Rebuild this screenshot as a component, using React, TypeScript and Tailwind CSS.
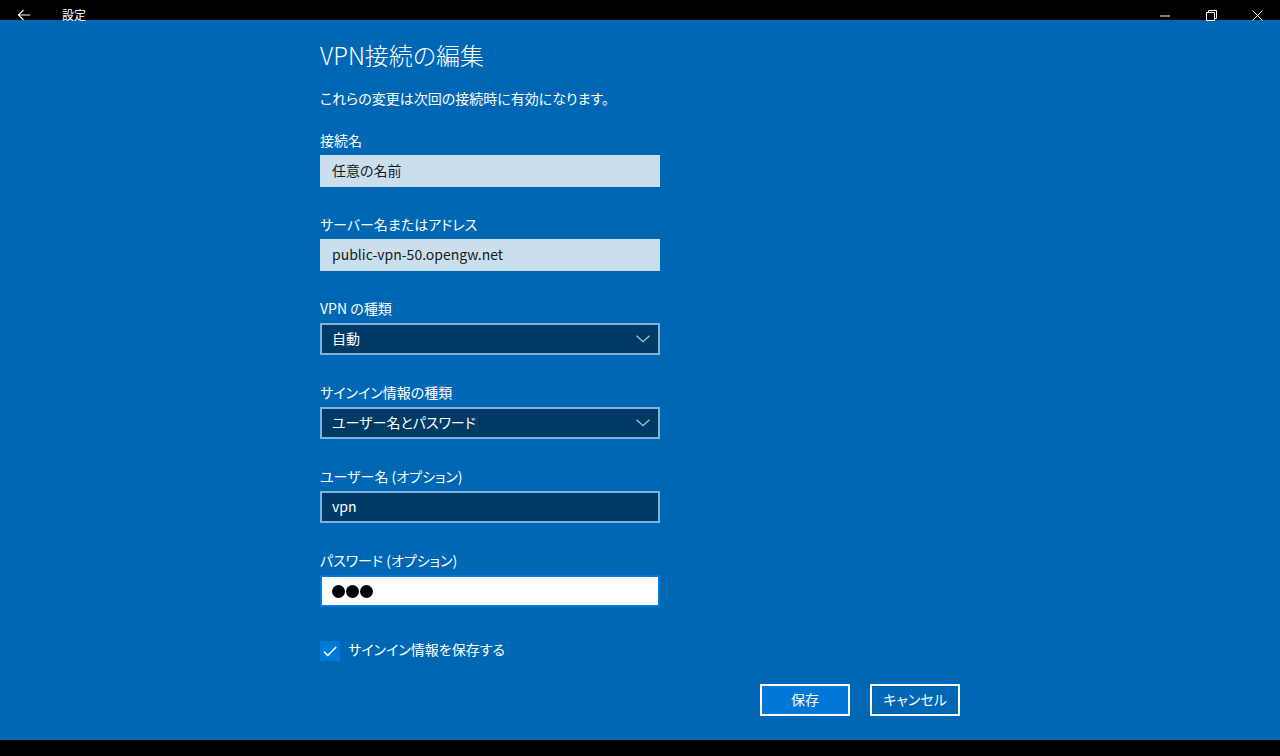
import React from "react";

const font = { fontFamily: '"Noto Sans CJK JP", "Noto Sans", sans-serif' };

function Chevron() {
  return (
    <svg width="14" height="8" viewBox="0 0 14 8" className="text-[#a9c8e3] mt-[2px]">
      <path d="M0.5 0.8 L7 6.8 L13.5 0.8" fill="none" stroke="currentColor" strokeWidth="1.2" />
    </svg>
  );
}

function Field({ label, children, first }: { label: string; children: React.ReactNode; first?: boolean }) {
  return (
    <div className={first ? "mt-[22px]" : "mt-[27px]"}>
      <div className="h-5 leading-5 text-[14px] text-white">{label}</div>
      <div className="mt-[5px] w-[340px] h-8">{children}</div>
    </div>
  );
}

export default function App() {
  return (
    <div
      className="w-[1280px] h-[756px] flex flex-col overflow-hidden select-none [font-feature-settings:'palt']"
      style={font}
    >
      {/* タイトルバー */}
      <div className="h-5 bg-black flex items-start text-white relative">
        <svg width="14" height="12" viewBox="0 0 14 12" className="absolute left-[17px] top-[9px]">
          <path d="M13 6 H1.5 M6.5 1 L1.5 6 L6.5 11" fill="none" stroke="white" strokeWidth="1.1" />
        </svg>
        <span className="absolute left-[62px] top-[8px] text-[12px] leading-[14px]">設定</span>
        <svg width="11" height="2" viewBox="0 0 11 2" className="absolute left-[1160px] top-[15px]">
          <path d="M0 1 H10" stroke="white" strokeWidth="1" />
        </svg>
        <svg width="11" height="11" viewBox="0 0 11 11" className="absolute left-[1206px] top-[10px]">
          <path d="M0.5 2.5 H8.5 V10.5 H0.5 Z" fill="none" stroke="white" strokeWidth="1" />
          <path d="M2.5 2.5 V0.5 H10.5 V8.5 H8.5" fill="none" stroke="white" strokeWidth="1" />
        </svg>
        <svg width="11" height="11" viewBox="0 0 11 11" className="absolute left-[1252px] top-[10px]">
          <path d="M0.5 0.5 L10.5 10.5 M10.5 0.5 L0.5 10.5" fill="none" stroke="white" strokeWidth="1" />
        </svg>
      </div>

      {/* 本体 */}
      <div className="flex-1 bg-[#0067b4] pl-[320px]">
        <div className="w-[640px] flex flex-col">
          <h1 className="mt-[19px] h-8 leading-8 text-[24px] font-light text-white">VPN接続の編集</h1>
          <p className="mt-[17px] h-5 leading-5 text-[14px] text-white">
            これらの変更は次回の接続時に有効になります。
          </p>

          <Field label="接続名" first>
            <div className="h-full bg-[#c9dfee] pl-3 pb-[2px] flex items-center text-[14px] text-[#1a1a1a]">任意の名前</div>
          </Field>

          <Field label="サーバー名またはアドレス">
            <div className="h-full bg-[#c9dfee] pl-3 pb-[2px] flex items-center text-[14px] text-[#1a1a1a]">
              public-vpn-50.opengw.net
            </div>
          </Field>

          <Field label="VPN の種類">
            <div className="h-full bg-[#003b66] border-2 border-[#80b3dc] pl-[10px] pr-[8px] pb-[2px] flex items-center justify-between text-[14px] text-white">
              <span>自動</span>
              <Chevron />
            </div>
          </Field>

          <Field label="サインイン情報の種類">
            <div className="h-full bg-[#003b66] border-2 border-[#80b3dc] pl-[10px] pr-[8px] pb-[2px] flex items-center justify-between text-[14px] text-white">
              <span>ユーザー名とパスワード</span>
              <Chevron />
            </div>
          </Field>

          <Field label="ユーザー名 (オプション)">
            <div className="h-full bg-[#003b66] border-2 border-[#80b3dc] pl-[10px] pb-[2px] flex items-center text-[14px] text-white">
              vpn
            </div>
          </Field>

          <Field label="パスワード (オプション)">
            <div className="h-full bg-white border-2 border-[#0078d7] pl-[10px] flex items-center gap-[1px]">
              <span className="w-[13px] h-[13px] rounded-full bg-black" />
              <span className="w-[13px] h-[13px] rounded-full bg-black" />
              <span className="w-[13px] h-[13px] rounded-full bg-black" />
            </div>
          </Field>

          <div className="mt-[34px] h-5 flex items-start gap-2">
            <div className="w-5 h-5 bg-[#0078d7] flex items-center justify-center">
              <svg width="14" height="11" viewBox="0 0 14 11">
                <path d="M0.8 5.5 L4.8 9.5 L13.2 1" fill="none" stroke="white" strokeWidth="1.5" />
              </svg>
            </div>
            <span className="text-[14px] leading-[17px] text-white">サインイン情報を保存する</span>
          </div>

          <div className="mt-[23px] flex justify-end gap-5">
            <button className="w-[90px] h-8 bg-[#0078d7] border-2 border-white text-white text-[14px] pb-[2px]">保存</button>
            <button className="w-[90px] h-8 border-2 border-white text-white text-[14px] pb-[2px]">キャンセル</button>
          </div>
        </div>
      </div>

      <div className="h-4 bg-black" />
    </div>
  );
}
